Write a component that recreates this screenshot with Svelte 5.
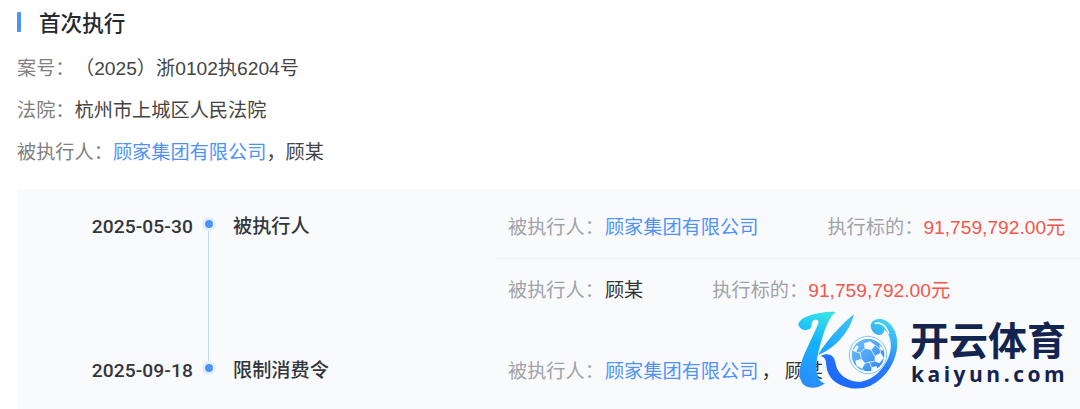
<script>
  const rows = [
    { name: '顾家集团有限公司', link: true, amount: '91,759,792.00元' },
    { name: '顾某', link: false, amount: '91,759,792.00元' }
  ];
</script>

<div class="page">
  <header class="title"><span class="bar"></span><h2>首次执行</h2></header>
  <p class="line"><span class="label">案号：</span><span class="case">（2025）浙0102执6204号</span></p>
  <p class="line"><span class="label">法院：</span>杭州市上城区人民法院</p>
  <p class="line"><span class="label">被执行人：</span><span class="link">顾家集团有限公司</span>，顾某</p>

  <section class="panel">
    <div class="group first">
      <div class="date">2025-05-30</div>
      <div class="axis"><i class="dot"></i><i class="rail"></i></div>
      <div class="kind">被执行人</div>
      <div class="details">
        {#each rows as r}
          <div class="row">
            <span class="cell"><span class="muted">被执行人：</span><span class={r.link ? 'link' : ''}>{r.name}</span></span>
            <span class="cell amount"><span class="muted">执行标的：</span><span class="money">{r.amount}</span></span>
          </div>
        {/each}
      </div>
    </div>
    <div class="group">
      <div class="date">2025-09-18</div>
      <div class="axis"><i class="dot"></i></div>
      <div class="kind">限制消费令</div>
      <div class="details">
        <div class="row">
          <span class="cell"><span class="muted">被执行人：</span><span class="link">顾家集团有限公司</span><span class="sep">，</span>顾某</span>
        </div>
      </div>
    </div>
  </section>

  <div class="logo">
    <svg width="120" height="100" viewBox="0 0 360 300" aria-hidden="true">
      <defs>
        <linearGradient id="kg" x1="0.6" y1="0" x2="0.4" y2="1">
          <stop offset="0" stop-color="#38e2e4"/>
          <stop offset="0.4" stop-color="#12b4fc"/>
          <stop offset="1" stop-color="#2b8bfb"/>
        </linearGradient>
        <linearGradient id="sw" x1="0.2" y1="1" x2="0.8" y2="0">
          <stop offset="0" stop-color="#1a66fb"/>
          <stop offset="0.5" stop-color="#2a7afa"/>
          <stop offset="1" stop-color="#3fd2ee"/>
        </linearGradient>
        <linearGradient id="arm" x1="1" y1="0" x2="0" y2="1">
          <stop offset="0" stop-color="#3dc4f4"/>
          <stop offset="1" stop-color="#16a2fc"/>
        </linearGradient>
        <linearGradient id="ball" x1="0" y1="0" x2="1" y2="1">
          <stop offset="0" stop-color="#72c4f8"/>
          <stop offset="1" stop-color="#2b84f5"/>
        </linearGradient>
      </defs>
      <path fill="url(#kg)" d="M25 72 C30 55 60 42 95 38 C110 36 125 34 137 37 C118 50 105 85 92 130 C84 160 76 190 80 215 C84 235 92 248 105 250 C90 262 70 266 55 262 C35 257 25 235 30 205 C35 170 65 120 85 70 C88 60 82 57 72 60 C62 65 68 78 62 85 C50 95 28 90 25 72 Z"/>
      <path fill="url(#arm)" d="M192 43 C180 95 135 145 85 165 C100 135 150 75 192 43 Z"/>
      <path fill="url(#sw)" d="M92 168 C105 160 122 160 130 172 C138 184 136 200 146 214 C158 234 185 247 212 245 C250 240 285 205 298 165 C307 135 303 105 282 88 C284 96 278 105 268 105 C255 105 243 92 242 78 C242 64 256 55 272 57 C298 60 322 90 322 130 C322 180 290 235 240 258 C205 272 165 266 135 245 C115 230 108 205 108 185 C106 175 100 170 92 168 Z"/>
      <path fill="none" stroke="#f9fafc" stroke-width="5" stroke-linecap="round" d="M256 70 C272 66 288 76 296 100"/>
      <circle cx="234" cy="165" r="56" fill="#fff" stroke="#7cc4fa" stroke-width="3"/>
      <g transform="translate(168 90)">
        <circle cx="66" cy="75" r="49" fill="url(#ball)"/>
        <g fill="#f2f9ff">
          <polygon points="54,40 72,34 88,46 76,60 56,56"/>
          <polygon points="86,78 104,68 114,84 100,100 86,94"/>
          <polygon points="28,92 46,86 58,100 48,116 32,108"/>
          <polygon points="76,112 92,108 94,118 76,124"/>
          <polygon points="20,62 32,46 38,50 30,66"/>
          <polygon points="100,44 110,54 112,62 102,58"/>
        </g>
        <g stroke="#f2f9ff" stroke-width="2.500" fill="none">
          <path d="M56 56 L42 68 L46 86 M76 60 L86 78 M58 100 L70 96 L86 94 M88 46 L102 58 L104 68 M70 96 L76 112 M42 68 L30 66 M48 116 L54 122"/>
        </g>
      </g>
    </svg>
    <div class="brand">
      <div class="cn">开云体育</div>
      <div class="en">kaiyun.com</div>
    </div>
  </div>
</div>

<style>
  :global(body) {
    margin: 0;
    background: #fff;
  }
  .page {
    position: relative;
    width: 1080px;
    height: 409px;
    overflow: hidden;
    font-family: "Liberation Sans", "Noto Sans CJK SC", sans-serif;
    font-size: 19.2px;
    color: #333;
  }
  .title {
    display: flex;
    align-items: center;
    height: 44px;
    padding: 0 0 0 17px;
    box-sizing: border-box;
  }
  .bar {
    width: 4px;
    height: 20px;
    background: #4e93fb;
    border-radius: 1px;
    margin-right: 18px;
  }
  h2 {
    margin: -2px 0 0;
    font-size: 21.6px;
    font-weight: 500;
    color: #262a30;
  }
  .line {
    margin: 0;
    height: 42px;
    line-height: 42px;
    padding-left: 17px;
    color: #444;
    white-space: nowrap;
  }
  .line:nth-of-type(1) {
    margin-top: 4px;
  }
  .case {
    margin-left: 10px;
  }
  .label {
    color: #808080;
  }
  .link {
    color: #4e93fb;
  }
  .panel {
    margin: 15px 0 0 17px;
    height: 220px;
    padding-top: 5px;
    box-sizing: border-box;
    background: #f9fafc;
  }
  .group {
    display: grid;
    grid-template-columns: 176px 32px 270px 1fr;
  }
  .group.first {
    padding-bottom: 16px;
  }
  .date {
    height: 64px;
    line-height: 65px;
    text-align: right;
    font-family: Roboto, "Liberation Sans", sans-serif;
    font-weight: 500;
    letter-spacing: 0.1px;
    color: #33363b;
  }
  .kind {
    height: 64px;
    line-height: 66px;
    padding-left: 8px;
    font-weight: 500;
    color: #33363b;
  }
  .axis {
    display: flex;
    flex-direction: column;
    align-items: center;
    padding-top: 26px;
    margin-bottom: -42px;
  }
  .group:not(.first) .axis {
    margin-bottom: 0;
  }
  .dot {
    flex: none;
    width: 8px;
    height: 8px;
    border-radius: 50%;
    background: #4e93fb;
    box-shadow: 0 0 0 3px #e3eefe;
  }
  .rail {
    flex: 1;
    width: 1px;
    margin: 3px 1px 0 0;
    background: #bcd9fd;
  }
  .row {
    display: flex;
    align-items: center;
    gap: 69px;
    height: 64px;
    padding-left: 13px;
    white-space: nowrap;
  }
  .row + .row {
    border-top: 1px solid #f0f1f4;
    box-sizing: border-box;
    padding-bottom: 3px;
  }
  .muted {
    color: #a0a3a8;
    margin-right: 1px;
  }
  .amount .muted {
    margin-right: 0;
  }
  .money {
    color: #f4564a;
  }
  .sep {
    margin-left: 3px;
    margin-right: 4px;
    color: #333;
  }
  .logo {
    position: absolute;
    left: 790px;
    top: 300px;
    width: 290px;
    height: 100px;
  }
  .logo svg {
    display: block;
  }
  .brand {
    position: absolute;
    left: 120px;
    top: 16px;
    color: #13244f;
  }
  .cn {
    font-family: "Noto Sans CJK SC", sans-serif;
    font-weight: 700;
    font-size: 39px;
    line-height: 44px;
    white-space: nowrap;
  }
  .en {
    font-family: "Open Sans", sans-serif;
    font-weight: 700;
    font-size: 21px;
    letter-spacing: 3.5px;
    line-height: 26px;
    white-space: nowrap;
    margin-top: 1px;
    margin-left: 1px;
  }
</style>
